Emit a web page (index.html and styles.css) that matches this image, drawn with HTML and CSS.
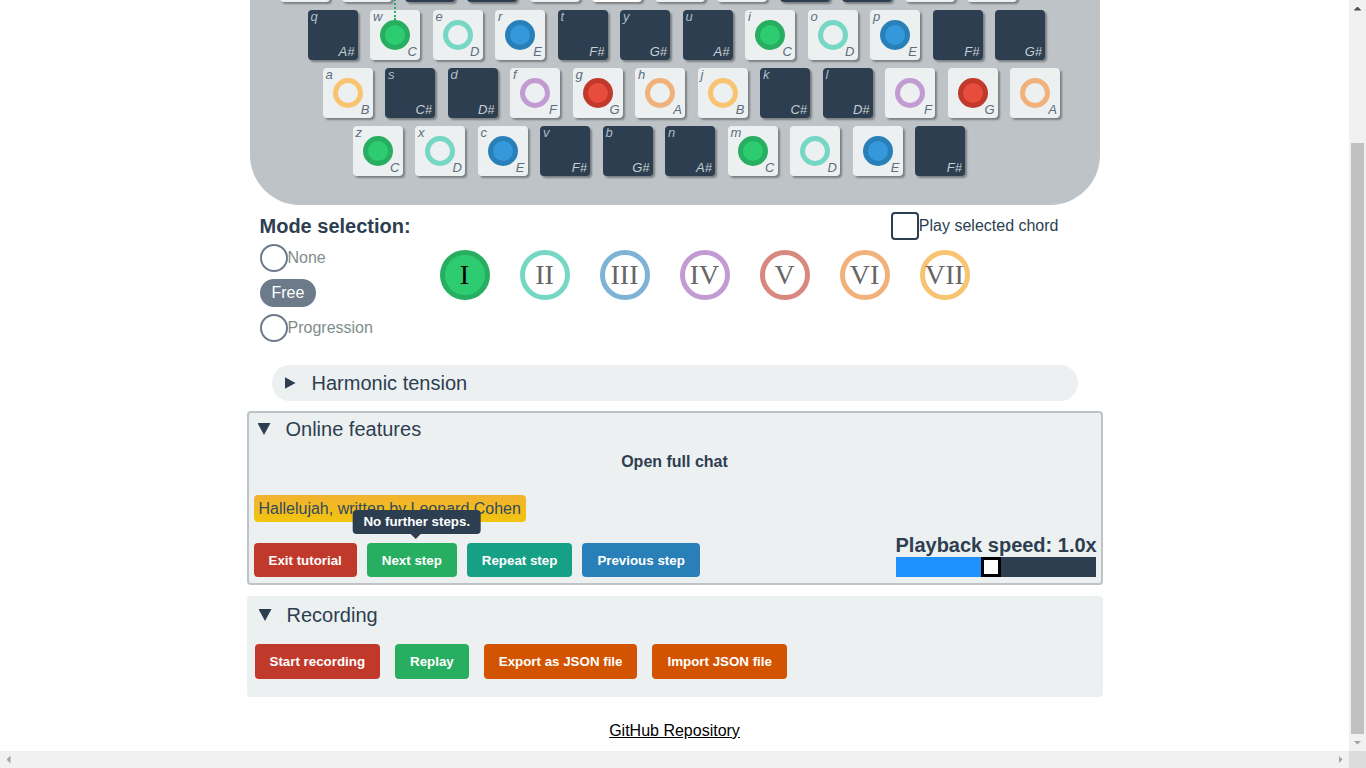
FILE: index.html
```html
<!DOCTYPE html>
<html lang="en">
<head>
<meta charset="utf-8">
<title>Keyboard harmony</title>
<link rel="stylesheet" href="styles.css">
</head>
<body>
<div class="keyboard">
  <span class="guide"></span>
  <div class="row row-0">
    <div class="key"><span class="letter">1</span><span class="dot ring-a"></span><span class="note">A</span></div>
    <div class="key"><span class="letter">2</span><span class="dot ring-b"></span><span class="note">B</span></div>
    <div class="key black"><span class="letter">3</span><span class="note">C#</span></div>
    <div class="key black"><span class="letter">4</span><span class="note">D#</span></div>
    <div class="key"><span class="letter">5</span><span class="dot ring-f"></span><span class="note">F</span></div>
    <div class="key lit"><span class="letter">6</span><span class="dot fill-g"></span><span class="note">G</span></div>
    <div class="key"><span class="letter">7</span><span class="dot ring-a"></span><span class="note">A</span></div>
    <div class="key"><span class="letter">8</span><span class="dot ring-b"></span><span class="note">B</span></div>
    <div class="key black"><span class="letter">9</span><span class="note">C#</span></div>
    <div class="key black"><span class="letter">0</span><span class="note">D#</span></div>
    <div class="key"><span class="letter">-</span><span class="dot ring-f"></span><span class="note">F</span></div>
    <div class="key"><span class="letter">=</span><span class="dot fill-g"></span><span class="note">G</span></div>
  </div>
  <div class="row row-1">
    <div class="key black"><span class="letter">q</span><span class="note">A#</span></div>
    <div class="key"><span class="letter">w</span><span class="dot fill-c"></span><span class="note">C</span></div>
    <div class="key"><span class="letter">e</span><span class="dot ring-d"></span><span class="note">D</span></div>
    <div class="key"><span class="letter">r</span><span class="dot fill-e"></span><span class="note">E</span></div>
    <div class="key black"><span class="letter">t</span><span class="note">F#</span></div>
    <div class="key black"><span class="letter">y</span><span class="note">G#</span></div>
    <div class="key black"><span class="letter">u</span><span class="note">A#</span></div>
    <div class="key"><span class="letter">i</span><span class="dot fill-c"></span><span class="note">C</span></div>
    <div class="key"><span class="letter">o</span><span class="dot ring-d"></span><span class="note">D</span></div>
    <div class="key"><span class="letter">p</span><span class="dot fill-e"></span><span class="note">E</span></div>
    <div class="key black"><span class="letter"></span><span class="note">F#</span></div>
    <div class="key black"><span class="letter"></span><span class="note">G#</span></div>
  </div>
  <div class="row row-2">
    <div class="key"><span class="letter">a</span><span class="dot ring-b"></span><span class="note">B</span></div>
    <div class="key black"><span class="letter">s</span><span class="note">C#</span></div>
    <div class="key black"><span class="letter">d</span><span class="note">D#</span></div>
    <div class="key"><span class="letter">f</span><span class="dot ring-f"></span><span class="note">F</span></div>
    <div class="key"><span class="letter">g</span><span class="dot fill-g"></span><span class="note">G</span></div>
    <div class="key"><span class="letter">h</span><span class="dot ring-a"></span><span class="note">A</span></div>
    <div class="key"><span class="letter">j</span><span class="dot ring-b"></span><span class="note">B</span></div>
    <div class="key black"><span class="letter">k</span><span class="note">C#</span></div>
    <div class="key black"><span class="letter">l</span><span class="note">D#</span></div>
    <div class="key"><span class="letter"></span><span class="dot ring-f"></span><span class="note">F</span></div>
    <div class="key"><span class="letter"></span><span class="dot fill-g"></span><span class="note">G</span></div>
    <div class="key"><span class="letter"></span><span class="dot ring-a"></span><span class="note">A</span></div>
  </div>
  <div class="row row-3">
    <div class="key"><span class="letter">z</span><span class="dot fill-c"></span><span class="note">C</span></div>
    <div class="key"><span class="letter">x</span><span class="dot ring-d"></span><span class="note">D</span></div>
    <div class="key"><span class="letter">c</span><span class="dot fill-e"></span><span class="note">E</span></div>
    <div class="key black"><span class="letter">v</span><span class="note">F#</span></div>
    <div class="key black"><span class="letter">b</span><span class="note">G#</span></div>
    <div class="key black"><span class="letter">n</span><span class="note">A#</span></div>
    <div class="key"><span class="letter">m</span><span class="dot fill-c"></span><span class="note">C</span></div>
    <div class="key"><span class="letter"></span><span class="dot ring-d"></span><span class="note">D</span></div>
    <div class="key"><span class="letter"></span><span class="dot fill-e"></span><span class="note">E</span></div>
    <div class="key black"><span class="letter"></span><span class="note">F#</span></div>
  </div>
</div>

<section class="mode">
  <div class="mode-left">
    <h2 class="mode-title">Mode selection:</h2>
    <div class="radio-list">
      <label class="radio"><span class="radio-circle"></span>None</label>
      <span class="radio-pill">Free</span>
      <label class="radio"><span class="radio-circle"></span>Progression</label>
    </div>
  </div>
  <div class="mode-right">
    <label class="check"><span class="check-box"></span>Play selected chord</label>
    <div class="chords">
      <span class="chord chord-1 active">I</span>
      <span class="chord chord-2">II</span>
      <span class="chord chord-3">III</span>
      <span class="chord chord-4">IV</span>
      <span class="chord chord-5">V</span>
      <span class="chord chord-6">VI</span>
      <span class="chord chord-7">VII</span>
    </div>
  </div>
</section>

<details class="tension">
  <summary class="summary"><span class="tri tri-closed"></span>Harmonic tension</summary>
</details>

<details class="panel online" open>
  <summary class="summary"><span class="tri tri-open"></span>Online features</summary>
  <p class="chat-link">Open full chat</p>
  <div class="song">Hallelujah, written by Leonard Cohen</div>
  <div class="controls">
    <div class="btn-group">
      <button class="btn red">Exit tutorial</button>
      <span class="tip-wrap">
        <button class="btn green">Next step</button>
        <span class="tooltip">No further steps.</span>
      </span>
      <button class="btn teal">Repeat step</button>
      <button class="btn blue">Previous step</button>
    </div>
    <div class="speed">
      <div class="speed-label">Playback speed: 1.0x</div>
      <div class="slider">
        <span class="slider-fill"></span>
        <span class="slider-thumb"></span>
        <span class="slider-rest"></span>
      </div>
    </div>
  </div>
</details>

<details class="panel recording" open>
  <summary class="summary"><span class="tri tri-open"></span>Recording</summary>
  <div class="rec-buttons">
    <button class="btn btn-lg red">Start recording</button>
    <button class="btn btn-lg green">Replay</button>
    <button class="btn btn-lg orange">Export as JSON file</button>
    <button class="btn btn-lg orange">Import JSON file</button>
  </div>
</details>

<footer class="footer"><a href="#" class="repo">GitHub Repository</a></footer>

<div class="sb-v" aria-hidden="true">
  <span class="sb-btn"><span class="arrow arrow-up"></span></span>
  <span class="sb-track"><span class="sb-thumb"></span></span>
  <span class="sb-btn"><span class="arrow arrow-down"></span></span>
</div>
<div class="sb-h" aria-hidden="true">
  <span class="sb-btn"><span class="arrow arrow-left"></span></span>
  <span class="sb-btn"><span class="arrow arrow-right"></span></span>
</div>
<div class="sb-corner" aria-hidden="true"></div>

<script src="script.js"></script>
</body>
</html>
```

FILE: styles.css
```css
* { box-sizing: border-box; }

html { overflow-x: hidden; }

body {
  margin: 0 17px 0 0;
  padding-bottom: 17px;
  font-family: "Liberation Sans", Arial, sans-serif;
  color: #2c3e50;
  background: #ffffff;
}

/* ---------- window scrollbars ---------- */
.sb-v {
  position: fixed;
  top: 0;
  right: 0;
  bottom: 17px;
  width: 17px;
  background: #f1f1f1;
  display: flex;
  flex-direction: column;
  z-index: 10;
}
.sb-h {
  position: fixed;
  left: 0;
  right: 17px;
  bottom: 0;
  height: 17px;
  background: #f1f1f1;
  display: flex;
  justify-content: space-between;
  z-index: 10;
}
.sb-corner {
  position: fixed;
  right: 0;
  bottom: 0;
  width: 17px;
  height: 17px;
  background: #dcdcdc;
  z-index: 10;
}
.sb-btn {
  flex: none;
  width: 17px;
  height: 17px;
  display: flex;
  align-items: center;
  justify-content: center;
}
.sb-track {
  flex: 1;
  display: flex;
  flex-direction: column;
  justify-content: flex-end;
  padding: 0 2px;
}
.sb-thumb {
  height: 591px;
  background: #c1c1c1;
}
.arrow { display: block; }
.arrow-up {
  width: 8px;
  height: 4px;
  background: #505050;
  clip-path: polygon(50% 0, 100% 100%, 0 100%);
}
.arrow-down {
  width: 8px;
  height: 4px;
  background: #a3a3a3;
  clip-path: polygon(0 0, 100% 0, 50% 100%);
}
.arrow-left {
  width: 4px;
  height: 8px;
  background: #a3a3a3;
  clip-path: polygon(100% 0, 100% 100%, 0 50%);
}
.arrow-right {
  width: 4px;
  height: 8px;
  background: #a3a3a3;
  clip-path: polygon(0 0, 100% 50%, 0 100%);
}

/* ---------- keyboard ---------- */
.keyboard {
  position: relative;
  width: 850px;
  margin: 0 auto;
  padding: 112px 0 29px;
  background: #bdc3c7;
  border-radius: 0 0 50px 50px;
  display: flex;
  flex-direction: column;
  gap: 8px;
}

.guide {
  position: absolute;
  left: 144px;
  top: 96px;
  height: 84px;
  border-left: 2px dotted #27ae60;
  z-index: 2;
}

.row { display: flex; gap: 12.5px; }
.row-0 { padding-left: 30px; }
.row-1 { padding-left: 58px; }
.row-2 { padding-left: 73px; }
.row-3 { padding-left: 103px; }

.key {
  flex: none;
  width: 50px;
  height: 50px;
  border-radius: 4px;
  background: #ecf0f1;
  box-shadow: 2px 2px 2px rgba(0, 0, 0, 0.35);
  display: grid;
}
.key > * { grid-area: 1 / 1; }
.key.black { background: #2c3e50; }
.key.lit { background: #ffffff; }

.letter {
  justify-self: start;
  align-self: start;
  padding: 0 0 0 3px;
  font-size: 13px;
  line-height: 13px;
  font-style: italic;
  color: #5d6d7e;
}
.note {
  justify-self: end;
  align-self: end;
  padding: 0 3px 2px 0;
  font-size: 13px;
  line-height: 13px;
  font-style: italic;
  color: #5d6d7e;
}
.black .letter { color: #aebccb; }
.black .note { color: #c8ced3; }

.dot {
  justify-self: center;
  align-self: center;
  width: 30px;
  height: 30px;
  border-radius: 50%;
  border: 5px solid;
}
.fill-c { background: #2ecc71; border-color: #27ae60; }
.fill-e { background: #3498db; border-color: #2980b9; }
.fill-g { background: #e74c3c; border-color: #c0392b; }
.ring-d { border-color: #76d7c4; }
.ring-f { border-color: #c39bd3; }
.ring-a { border-color: #f0b27a; }
.ring-b { border-color: #f8c471; }

/* ---------- mode selection ---------- */
.mode {
  width: 850px;
  margin: 0 auto;
  padding: 7px 10px 0;
  display: flex;
}
.mode-left {
  flex: none;
  width: 180px;
  display: flex;
  flex-direction: column;
}
.mode-title {
  margin: 2px 0 6px;
  font-size: 20px;
  line-height: 24px;
  font-weight: bold;
  color: #2c3e50;
}
.radio-list {
  display: flex;
  flex-direction: column;
  align-items: flex-start;
  gap: 7px;
}
.radio {
  display: flex;
  align-items: center;
  height: 28px;
  font-size: 16px;
  color: #7f8c8d;
}
.radio-circle {
  width: 28px;
  height: 28px;
  border-radius: 50%;
  border: 2px solid #6c7a89;
}
.radio-pill {
  height: 28px;
  padding: 0 12px;
  border-radius: 14px;
  background: #6c7a89;
  color: #ffffff;
  font-size: 16px;
  line-height: 28px;
}

.mode-right {
  flex: 1;
  display: flex;
  flex-direction: column;
}
.check {
  align-self: flex-end;
  margin-right: 31px;
  display: flex;
  align-items: center;
  height: 28px;
  font-size: 16px;
  color: #2c3e50;
}
.check-box {
  width: 28px;
  height: 28px;
  border: 2px solid #2c3e50;
  border-radius: 4px;
}
.chords {
  margin-top: 10px;
  display: flex;
  gap: 30px;
}
.chord {
  width: 50px;
  height: 50px;
  border-radius: 50%;
  border: 5px solid;
  background: #ffffff;
  display: flex;
  align-items: center;
  justify-content: center;
  font-family: "Liberation Serif", "Times New Roman", serif;
  font-size: 28px;
  color: #666666;
}
.chord.active { background: #2ecc71; border-color: #27ae60; color: #000000; }
.chord-2 { border-color: #76d7c4; }
.chord-3 { border-color: #7fb3d5; }
.chord-4 { border-color: #c39bd3; }
.chord-5 { border-color: #d98880; }
.chord-6 { border-color: #f0b27a; }
.chord-7 { border-color: #f8c471; }

/* ---------- collapsible sections ---------- */
.summary {
  list-style: none;
  display: flex;
  align-items: center;
  height: 24px;
  font-size: 20px;
  color: #2c3e50;
  cursor: pointer;
}
.summary::-webkit-details-marker { display: none; }
.tri { flex: none; background: #2c3e50; }
.tri-closed {
  width: 11px;
  height: 12px;
  clip-path: polygon(0 0, 100% 50%, 0 100%);
  margin-right: 16px;
}
.tri-open {
  width: 13px;
  height: 12px;
  clip-path: polygon(0 0, 100% 0, 50% 100%);
  margin-right: 15px;
}

.tension {
  width: 806px;
  margin: 23px auto 0;
  background: #ecf0f1;
  border-radius: 18px;
}
.tension .summary {
  height: 36px;
  padding-left: 13px;
}

.panel {
  width: 856px;
  margin: 10px auto 0;
  background: #ecf0f1;
  border-radius: 4px;
}
.online {
  border: 2px solid #bdc3c7;
  padding: 4px 5px 6px;
}
.online .summary { padding-left: 4px; }

.chat-link {
  margin: 10px 0 0;
  text-align: center;
  font-size: 16px;
  line-height: 21px;
  font-weight: bold;
  color: #2c3e50;
}
.song {
  width: fit-content;
  margin-top: 23px;
  padding: 3px 5px;
  font-size: 16px;
  line-height: 21px;
  color: #34495e;
  border-radius: 4px;
  background: linear-gradient(#f2b230, #f1c40f);
}

.controls {
  margin-top: 11px;
  display: flex;
  justify-content: space-between;
  align-items: flex-end;
}
.btn-group { display: flex; gap: 10px; }

.btn {
  height: 34px;
  padding: 0 15px;
  border: none;
  border-radius: 4px;
  font-family: "Liberation Sans", Arial, sans-serif;
  font-size: 13.333px;
  font-weight: bold;
  color: #ffffff;
  cursor: pointer;
}
.btn-lg { height: 35px; }
.red { background: #c0392b; }
.green { background: #27ae60; }
.teal { background: #16a085; }
.blue { background: #2980b9; }
.orange { background: #d35400; }

.tip-wrap { position: relative; display: flex; }
.tooltip {
  position: absolute;
  bottom: calc(100% + 9px);
  left: 50%;
  transform: translateX(calc(-50% + 5px));
  padding: 4px 11px;
  border-radius: 4px;
  background: #2c3e50;
  color: #ffffff;
  font-size: 13.333px;
  line-height: 16px;
  font-weight: bold;
  white-space: nowrap;
}
.tooltip::after {
  content: "";
  position: absolute;
  top: 100%;
  left: 50%;
  margin-left: -6px;
  border: 5px solid transparent;
  border-top-color: #2c3e50;
}

.speed { width: 200px; }
.speed-label {
  font-size: 20px;
  line-height: 24px;
  font-weight: bold;
  color: #2c3e50;
  text-align: right;
  white-space: nowrap;
}
.slider { display: flex; height: 20px; }
.slider-fill { width: 85px; background: #1e90ff; }
.slider-thumb {
  width: 20px;
  background: #ffffff;
  border: 3px solid #000000;
}
.slider-rest { flex: 1; background: #2c3e50; }

.recording {
  margin-top: 11px;
  padding: 7px 8px 18px;
}
.recording .summary { padding-left: 4px; }
.rec-buttons {
  margin-top: 17px;
  display: flex;
  gap: 15px;
}

/* ---------- footer ---------- */
.footer {
  margin-top: 24px;
  padding-bottom: 10px;
  text-align: center;
  font-size: 16px;
  line-height: 20px;
}
.repo { color: #000000; text-decoration: underline; }
```

FILE: script.js
```js
window.addEventListener('load', function () {
  window.scrollTo(0, document.documentElement.scrollHeight);
});
window.scrollTo(0, document.documentElement.scrollHeight);
```
